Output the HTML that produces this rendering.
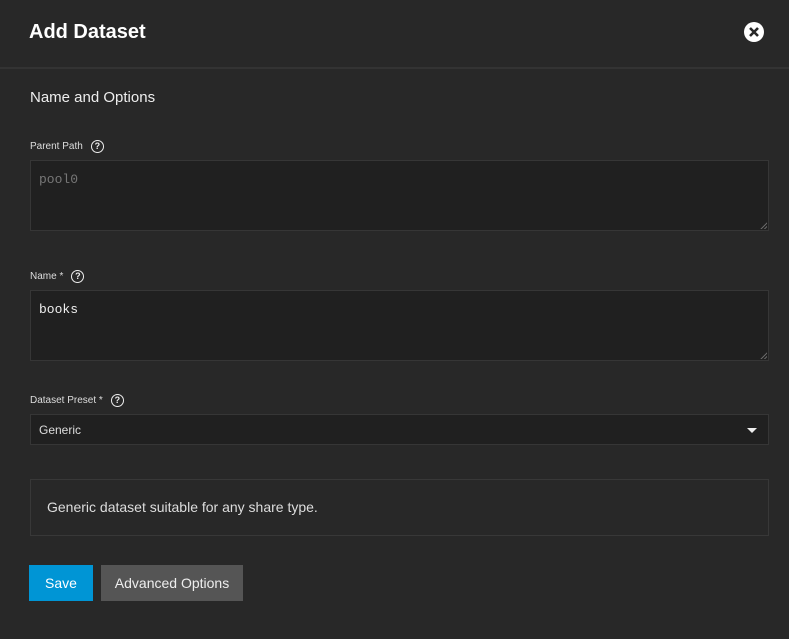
<!DOCTYPE html>
<html><head><style>
body{margin:0;width:789px;height:639px;background:#282828;font-family:"Liberation Sans",sans-serif;color:#fff;position:relative;overflow:hidden}
.a{position:absolute}
.inp{position:absolute;left:30px;width:739px;background:#202020;border:1px solid #363636;box-sizing:border-box}
.lbl{font-size:10px;color:#ddd}
.q{display:inline-block;width:11px;height:11px;border:1.5px solid #eee;border-radius:50%;font-size:9px;font-weight:bold;text-align:center;line-height:11px;color:#eee;vertical-align:middle;margin-left:8px}
.grip{position:absolute;right:1px;bottom:1px;width:8px;height:8px;background:repeating-linear-gradient(135deg,transparent 0 1.5px,#666 1.5px 2.5px);clip-path:polygon(100% 0,100% 100%,0 100%)}
</style></head><body>
<div class="a" style="left:29px;top:21px;font-size:20px;font-weight:bold">Add Dataset</div>
<div class="a" style="left:744px;top:22px;width:20px;height:20px;border-radius:50%;background:#fff">
<svg width="20" height="20"><path d="M6 6L14 14M14 6L6 14" stroke="#282828" stroke-width="2.6"/></svg></div>
<div class="a" style="left:0;top:67px;width:789px;height:2px;background:#333"></div>
<div class="a" style="left:30px;top:89px;font-size:15px;color:#eee">Name and Options</div>
<div class="a lbl" style="left:30px;top:140px">Parent Path<span class="q">?</span></div>
<div class="inp" style="top:160px;height:71px"><div class="a" style="left:8px;top:11px;font-family:'Liberation Mono',monospace;font-size:13px;color:#777">pool0</div><div class="grip"></div></div>
<div class="a lbl" style="left:30px;top:270px">Name *<span class="q">?</span></div>
<div class="inp" style="top:290px;height:71px"><div class="a" style="left:8px;top:11px;font-family:'Liberation Mono',monospace;font-size:13px;color:#eee">books</div><div class="grip"></div></div>
<div class="a lbl" style="left:30px;top:394px">Dataset Preset *<span class="q">?</span></div>
<div class="inp" style="top:414px;height:31px"><div class="a" style="left:8px;top:8px;font-size:12px;color:#ddd">Generic</div>
<div class="a" style="right:11px;top:13px;width:0;height:0;border-left:5px solid transparent;border-right:5px solid transparent;border-top:5px solid #eee"></div></div>
<div class="a" style="left:30px;top:479px;width:739px;height:57px;border:1px solid #383838;box-sizing:border-box"><div class="a" style="left:16px;top:19px;font-size:14px;color:#ddd">Generic dataset suitable for any share type.</div></div>
<div class="a" style="left:29px;top:565px;width:64px;height:36px;background:#0095d5;font-size:14px;text-align:center;line-height:36px">Save</div>
<div class="a" style="left:101px;top:565px;width:142px;height:36px;background:#555;font-size:14px;text-align:center;line-height:36px;color:#eee">Advanced Options</div>
</body></html>
